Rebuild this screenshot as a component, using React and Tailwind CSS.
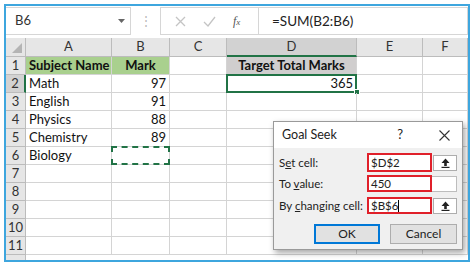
import React from "react";

const cols = ["A", "B", "C", "D", "E", "F"];

const rows = [
  { n: 1, a: "Subject Name", b: "Mark", d: "Target Total Marks" },
  { n: 2, a: "Math", b: "97", d: "365" },
  { n: 3, a: "English", b: "91" },
  { n: 4, a: "Physics", b: "88" },
  { n: 5, a: "Chemistry", b: "89" },
  { n: 6, a: "Biology", b: "" },
  { n: 7 },
  { n: 8 },
  { n: 9 },
  { n: 10 },
  { n: 11 },
];

function UpArrowBtn() {
  return (
    <div className="w-[24px] h-[16px] bg-white border border-[#adadad] flex items-center justify-center">
      <svg width="9" height="10" viewBox="0 0 9 10">
        <path d="M4.5 0.5 L8.5 5 H5.8 V8 H3.2 V5 H0.5 Z" fill="#222" />
        <rect x="0.5" y="8.8" width="8" height="1.2" fill="#222" />
      </svg>
    </div>
  );
}

function GoalSeek() {
  return (
    <div
      className="absolute left-[267px] top-[115px] w-[190px] h-[129px] bg-[#f0f0f0] border border-[#9a9a9a] shadow-[2px_3px_6px_rgba(0,0,0,0.35)] flex flex-col whitespace-nowrap"
      style={{ fontFamily: 'Lato, "Open Sans", sans-serif' }}
    >
      <div className="h-[26px] bg-white flex items-center pl-[8px] pr-[12px] text-[12.5px] text-[#222]">
        <span className="flex-1">Goal Seek</span>
        <span className="mr-[36px] text-[13px]">?</span>
        <svg width="11" height="11" viewBox="0 0 11 11">
          <path d="M0.5 0.5 L10.5 10.5 M10.5 0.5 L0.5 10.5" stroke="#333" strokeWidth="1.1" />
        </svg>
      </div>
      <div className="flex-1 pl-[5px] pr-[5px] pt-[5px] text-[11.5px] text-[#222]">
        <div className="flex items-center h-[19px] mb-[2px]">
          <span className="w-[88px]">S<u>e</u>t cell:</span>
          <div className="w-[65px] h-[19px] bg-white border-2 border-[#e0202a] flex items-center pl-[2px]">$D$2</div>
          <div className="ml-[1px]"><UpArrowBtn /></div>
        </div>
        <div className="flex items-center h-[19px] mb-[3px]">
          <span className="w-[88px]">To <u>v</u>alue:</span>
          <div className="w-[65px] h-[17px] bg-white border-2 border-[#e0202a] flex items-center pl-[2px]">450</div>
          <div className="w-[25px] h-[16px] bg-white border border-l-0 border-[#bdbdbd]"></div>
        </div>
        <div className="flex items-center h-[19px]">
          <span className="w-[88px]">By <u>c</u>hanging cell:</span>
          <div className="w-[65px] h-[17px] bg-white border-2 border-[#e0202a] flex items-center pl-[2px]">$B$6<span className="w-px h-[12px] bg-black" /></div>
          <div className="ml-[1px]"><UpArrowBtn /></div>
        </div>
        <div className="flex justify-end gap-[10px] mt-[9px]">
          <button className="w-[66px] h-[20px] bg-[#e1e1e1] border-2 border-[#0078d7] text-[12px] leading-none">OK</button>
          <button className="w-[67px] h-[20px] bg-[#e1e1e1] border border-[#adadad] text-[12px] leading-none">Cancel</button>
        </div>
      </div>
    </div>
  );
}

export default function App() {
  const cell = "border-r border-b border-[#d4d4d4] h-[18px] flex items-center whitespace-nowrap";
  return (
    <div className="w-[474px] h-[269px] bg-white p-[4px]">
      <div
        className="relative w-[466px] h-[258px] border-2 border-[#3ea6de] overflow-hidden bg-white"
        style={{ fontFamily: 'Lato, "Open Sans", sans-serif' }}
      >
        {/* formula bar */}
        <div className="h-[32px] flex items-start pt-[1px] text-[#333]">
          <div className="w-[125px] h-[28px] border border-l-0 border-[#d6d6d6] flex items-center pl-[9px] pr-[5px] text-[13px]">
            <span className="flex-1">B6</span>
            <svg width="7" height="4" viewBox="0 0 7 4"><path d="M0 0 H7 L3.5 4 Z" fill="#666" /></svg>
          </div>
          <div className="w-[29px] h-[28px] flex items-center justify-center text-[#b8b8b8] text-[12px]">⋮</div>
          <div className="flex-1 h-[28px] border border-[#d6d6d6] flex items-center">
            <div className="w-[98px] h-full flex items-center pl-[14px] gap-[17px] border-r border-[#d6d6d6]">
              <svg width="11" height="11" viewBox="0 0 11 11">
                <path d="M1 1 L10 10 M10 1 L1 10" stroke="#c4c4c4" strokeWidth="1.3" />
              </svg>
              <svg width="13" height="11" viewBox="0 0 13 11">
                <path d="M1 6 L5 10 L12 1" stroke="#c4c4c4" strokeWidth="1.3" fill="none" />
              </svg>
              <span className="italic text-[#555] text-[12px]" style={{ fontFamily: '"Liberation Serif", serif' }}>f<span className="text-[9px]">x</span></span>
            </div>
            <span className="pl-[13px] text-[13.5px] text-[#222]">=SUM(B2:B6)</span>
          </div>
        </div>

        {/* grid */}
        <div className="grid grid-cols-[20px_86px_58px_57px_130px_66px_1fr] text-[13px] text-[#111]">
          <div className="h-[19px] bg-[#e6e6e6] border-r border-b border-[#bcbcbc] flex items-end justify-end p-[3px]">
            <svg width="10" height="10" viewBox="0 0 10 10"><path d="M10 0 V10 H0 Z" fill="#b4b4b4" /></svg>
          </div>
          {cols.map((c) => (
            <div
              key={c}
              className={
                c === "D"
                  ? "h-[19px] bg-[#d2d2d2] border-r border-[#bcbcbc] border-b-2 border-b-[#217346] flex items-center justify-center text-[13px] text-[#333]"
                  : "h-[19px] bg-[#e6e6e6] border-r border-b border-[#bcbcbc] flex items-center justify-center text-[13px] text-[#333]"
              }
            >
              {c}
            </div>
          ))}
          {rows.map((r) => (
            <React.Fragment key={r.n}>
              <div
                className={
                  r.n === 2
                    ? "h-[18px] bg-[#d2d2d2] border-b border-[#bcbcbc] border-r-2 border-r-[#217346] flex items-center justify-center text-[13px] text-[#333]"
                    : "h-[18px] bg-[#e6e6e6] border-r border-b border-[#bcbcbc] flex items-center justify-center text-[13px] text-[#333]"
                }
              >
                {r.n}
              </div>
              <div className={`${cell} pl-[3px] ${r.n === 1 ? "bg-[#a9d08e] font-bold" : ""}`}>{r.a}</div>
              <div
                className={`${cell} relative ${
                  r.n === 1 ? "bg-[#a9d08e] font-bold justify-center" : "justify-end pr-[3px]"
                }`}
              >
                {r.b}
                {r.n === 6 && (
                  <div className="absolute -left-px -top-px w-[59px] h-[19px] border-2 border-dashed border-[#217346]" />
                )}
              </div>
              <div className={cell}></div>
              <div
                className={`${cell} relative ${
                  r.n === 1 ? "bg-[#d0cece] font-bold justify-center" : "justify-end pr-[3px]"
                }`}
              >
                {r.d}
                {r.n === 2 && (
                  <>
                    <div className="absolute -left-px -top-px w-[131px] h-[19px] border-2 border-[#217346]" />
                    <div className="absolute right-[-4px] bottom-[-3px] w-[6px] h-[6px] bg-[#217346] border border-white" />
                  </>
                )}
              </div>
              <div className={cell}></div>
              <div className={cell}></div>
            </React.Fragment>
          ))}
          <div className="h-[18px] bg-[#e6e6e6] border-r border-[#bcbcbc]"></div>
        </div>

        <GoalSeek />
      </div>
    </div>
  );
}
